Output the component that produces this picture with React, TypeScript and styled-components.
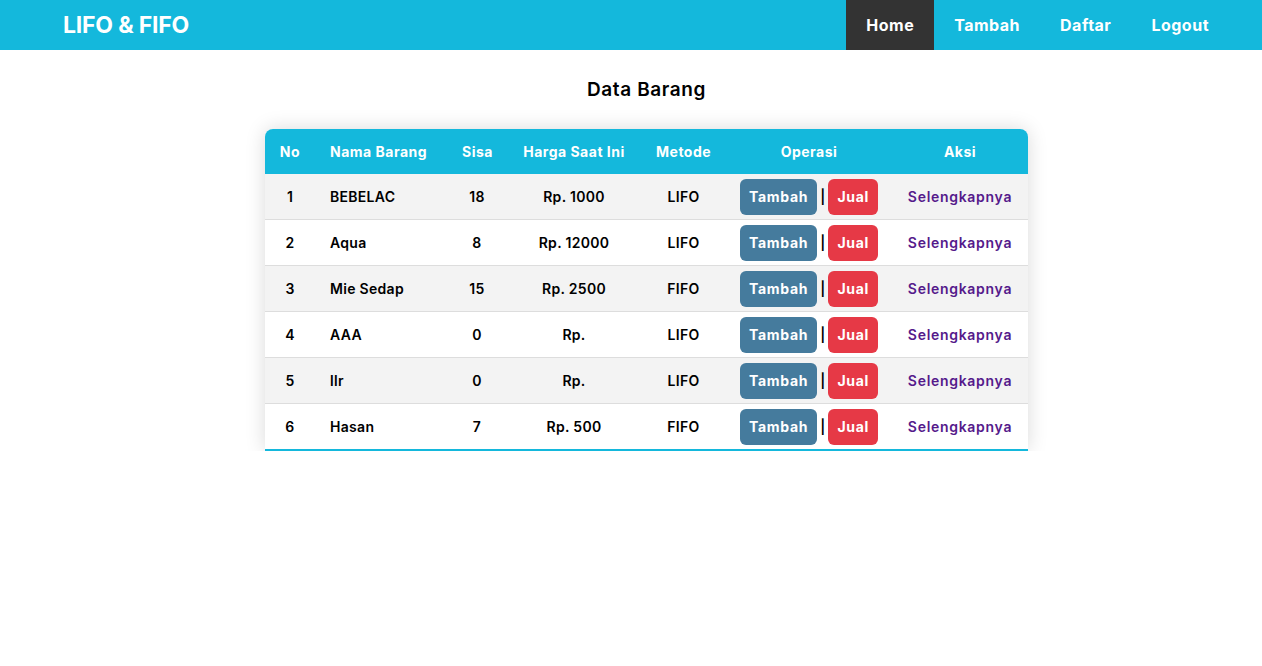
import styled, { createGlobalStyle } from "styled-components";

type Barang = {
  no: number;
  nama: string;
  sisa: number;
  harga: string;
  metode: string;
};

const DATA: Array<Barang> = [
  { no: 1, nama: "BEBELAC", sisa: 18, harga: "Rp. 1000", metode: "LIFO" },
  { no: 2, nama: "Aqua", sisa: 8, harga: "Rp. 12000", metode: "LIFO" },
  { no: 3, nama: "Mie Sedap", sisa: 15, harga: "Rp. 2500", metode: "FIFO" },
  { no: 4, nama: "AAA", sisa: 0, harga: "Rp.", metode: "LIFO" },
  { no: 5, nama: "llr", sisa: 0, harga: "Rp.", metode: "LIFO" },
  { no: 6, nama: "Hasan", sisa: 7, harga: "Rp. 500", metode: "FIFO" },
];

const MENU = ["Home", "Tambah", "Daftar", "Logout"];

function App() {
  return (
    <>
      <GlobalStyle />
      <SNav>
        <SLogo>LIFO &amp; FIFO</SLogo>
        <SMenu>
          {MENU.map((m, i) => (
            <SMenuItem key={m} active={i === 0}>{m}</SMenuItem>
          ))}
        </SMenu>
      </SNav>
      <SMain>
        <STitle>Data Barang</STitle>
        <SCard>
          <STable>
            <colgroup>
              <col style={{ width: 50 }} />
              <col style={{ width: 132 }} />
              <col style={{ width: 60 }} />
              <col style={{ width: 134 }} />
              <col style={{ width: 85 }} />
              <col style={{ width: 166 }} />
              <col style={{ width: 136 }} />
            </colgroup>
            <thead>
              <tr>
                <Sth>No</Sth>
                <Sth align="left">Nama Barang</Sth>
                <Sth>Sisa</Sth>
                <Sth>Harga Saat Ini</Sth>
                <Sth>Metode</Sth>
                <Sth>Operasi</Sth>
                <Sth>Aksi</Sth>
              </tr>
            </thead>
            <tbody>
              {DATA.map((b) => (
                <STr key={b.no}>
                  <Std>{b.no}</Std>
                  <Std align="left">{b.nama}</Std>
                  <Std>{b.sisa}</Std>
                  <Std>{b.harga}</Std>
                  <Std>{b.metode}</Std>
                  <Std>
                    <SOps>
                      <SButton color="#457b9d">Tambah</SButton>
                      <SSep>|</SSep>
                      <SButton color="#e63946">Jual</SButton>
                    </SOps>
                  </Std>
                  <Std>
                    <SLink href="#">Selengkapnya</SLink>
                  </Std>
                </STr>
              ))}
            </tbody>
          </STable>
        </SCard>
      </SMain>
    </>
  );
}

const GlobalStyle = createGlobalStyle`
  body {
    margin: 0;
    font-family: Inter, "Noto Sans", sans-serif;
    background: #fff;
    color: #000;
  }
`;

const SNav = styled.nav`
  height: 50px;
  background: #14b8dc;
  display: flex;
  align-items: center;
  justify-content: space-between;
  padding: 0 33px 0 63px;
`;

const SLogo = styled.div`
  color: #fff;
  font-size: 23px;
  font-weight: 700;
  letter-spacing: -0.2px;
`;

const SMenu = styled.ul`
  display: flex;
  list-style: none;
  margin: 0;
  padding: 0;
  height: 100%;
`;

const SMenuItem = styled.li<{ active?: boolean }>`
  display: flex;
  align-items: center;
  padding: 0 20px;
  color: #fff;
  font-size: 16px;
  font-weight: 700;
  letter-spacing: 0.5px;
  background: ${(p) => (p.active ? "#333333" : "transparent")};
`;

const SMain = styled.main`
  display: flex;
  flex-direction: column;
  align-items: center;
  padding-left: 31px;
`;

const STitle = styled.h3`
  margin: 28px 0 27px;
  font-size: 19px;
  line-height: 24px;
  font-weight: 600;
  letter-spacing: 0.6px;
`;

const SCard = styled.div`
  width: 763px;
  border-radius: 8px 8px 0 0;
  overflow: hidden;
  box-shadow: 0 0 20px rgba(0, 0, 0, 0.15);
  border-bottom: 2px solid #14b8dc;
`;

const STable = styled.table`
  width: 100%;
  table-layout: fixed;
  border-collapse: collapse;
`;

const Sth = styled.th<{ align?: string }>`
  background: #14b8dc;
  color: #fff;
  height: 45px;
  padding: 0 15px;
  font-size: 14px;
  font-weight: 700;
  letter-spacing: 0.5px;
  text-align: ${(p) => p.align || "center"};
  white-space: nowrap;
  &:first-child {
    padding: 0;
  }
`;

const STr = styled.tr`
  border-bottom: 1px solid #dddddd;
  &:nth-child(odd) {
    background: #f3f3f3;
  }
  &:last-child {
    border-bottom: none;
  }
`;

const Std = styled.td<{ align?: string }>`
  height: 45px;
  padding: 0 15px;
  font-size: 14px;
  font-weight: 600;
  letter-spacing: 0.3px;
  text-align: ${(p) => p.align || "center"};
  white-space: nowrap;
  &:first-child {
    padding: 0;
  }
`;

const SOps = styled.div`
  display: flex;
  align-items: center;
  justify-content: center;
  gap: 3px;
`;

const SButton = styled.button<{ color: string }>`
  height: 36px;
  border: none;
  border-radius: 6px;
  padding: 0 9px;
  background: ${(p) => p.color};
  color: #fff;
  font-family: inherit;
  font-size: 14px;
  font-weight: 700;
  letter-spacing: 0.7px;
`;

const SSep = styled.span`
  font-weight: 600;
  font-size: 14px;
`;

const SLink = styled.a`
  color: #551a8b;
  text-decoration: none;
  font-weight: 600;
  font-size: 14px;
  letter-spacing: 0.7px;
`;

export default App;
